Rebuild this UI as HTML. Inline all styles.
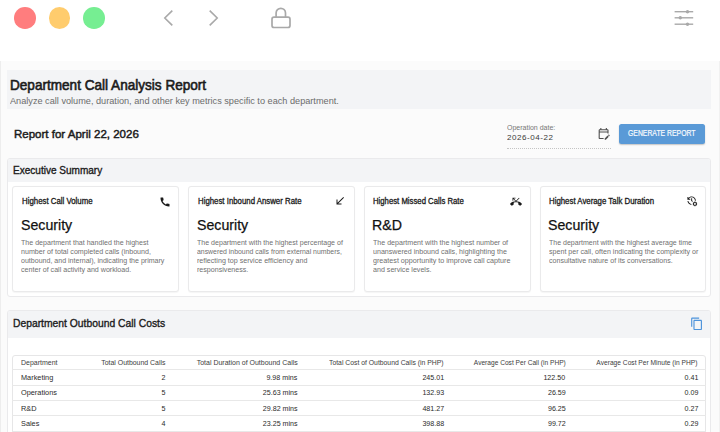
<!DOCTYPE html>
<html><head><meta charset="utf-8">
<style>
*{margin:0;padding:0;box-sizing:border-box}
html,body{width:720px;height:432px;overflow:hidden;background:#fff;font-family:"Liberation Sans",sans-serif;color:#1c1c1c;position:relative}
.t{position:absolute;white-space:nowrap;line-height:1}
.b{position:absolute}
.dot{position:absolute;width:21.6px;height:21.6px;border-radius:50%}
.card{position:absolute;top:186.4px;height:105.2px;background:#fff;border:1px solid #eaeaeb;border-radius:3px;box-shadow:0 0.5px 1px rgba(0,0,0,0.04)}
.hl{position:absolute;left:12.2px;width:694.2px;height:1px;background:#e8e8e8}
svg{position:absolute;overflow:visible}
</style></head><body>
<!-- top bar -->
<div class="dot" style="left:14.4px;top:7.1px;background:#ff7d7e"></div>
<div class="dot" style="left:48.9px;top:7.1px;background:#ffcc6d"></div>
<div class="dot" style="left:83.4px;top:7.1px;background:#76ee92"></div>
<svg style="left:160px;top:8px" width="20" height="20" viewBox="0 0 20 20"><path d="M12.3 2.6 L4.8 10 L12.3 17.4" fill="none" stroke="#a9a9a9" stroke-width="1.6"/></svg>
<svg style="left:202.7px;top:8px" width="20" height="20" viewBox="0 0 20 20"><path d="M6.7 2.6 L14.2 10 L6.7 17.4" fill="none" stroke="#a9a9a9" stroke-width="1.6"/></svg>
<svg style="left:270px;top:6px" width="22" height="24" viewBox="0 0 22 24"><path d="M6.1 11.5 V7 A4.7 4.7 0 0 1 15.5 7 V11.5" fill="none" stroke="#a9a9a9" stroke-width="1.7"/><rect x="2" y="11.2" width="18" height="10.3" rx="2" fill="none" stroke="#a9a9a9" stroke-width="1.7"/></svg>
<svg style="left:672px;top:8px" width="24" height="20" viewBox="0 0 24 20"><g stroke="#a9a9a9" stroke-width="1.4"><line x1="2.6" y1="3.7" x2="21.2" y2="3.7"/><line x1="2.6" y1="9.8" x2="21.2" y2="9.8"/><line x1="2.6" y1="16.2" x2="21.2" y2="16.2"/></g><g fill="#a9a9a9"><circle cx="15.5" cy="3.7" r="1.7"/><circle cx="8.3" cy="9.8" r="1.7"/><circle cx="15.5" cy="16.2" r="1.7"/></g></svg>

<!-- page container -->
<div class="b" style="left:0;top:61px;width:720px;height:371px;background:#fbfbfb"></div>
<div class="b" style="left:719px;top:61px;width:1px;height:371px;background:#f1f1f1"></div>
<div class="b" style="left:0;top:61px;width:1px;height:371px;background:#ededed"></div>

<!-- header band -->
<div class="b" style="left:7.4px;top:69.6px;width:703.6px;height:39.6px;background:#f3f4f6"></div>

<!-- report row -->
<div class="b" style="left:0;top:109.2px;width:720px;height:0px;background:#fff"></div>
<div class="b" style="left:507px;top:147.8px;width:104px;height:0;border-top:1px dotted #c4c4c4"></div>
<svg style="left:597.3px;top:126.7px" width="13.2" height="13.2" viewBox="0 0 24 24"><path d="M5 10h14v2h2V6c0-1.1-.9-2-2-2h-1V2h-2v2H8V2H6v2H5c-1.11 0-1.99.9-1.99 2L3 20c0 1.1.89 2 2 2h7v-2H5V10zm0-4h14v2H5V6zm17.84 10.28-.71.71-2.12-2.12.71-.71c.39-.39 1.02-.39 1.41 0l.71.71c.39.39.39 1.02 0 1.41zm-3.54-.7 2.12 2.12-5.3 5.3H14v-2.12l5.3-5.3z" fill="#4f4f4f"/></svg>
<div class="b" style="left:619.4px;top:123.9px;width:85.2px;height:20.1px;background:#5a9ad7;border-radius:2.5px;box-shadow:0 1px 1.5px rgba(0,0,0,0.22)"></div>

<!-- executive summary panel -->
<div class="b" style="left:7.4px;top:157.6px;width:703.6px;height:139.2px;background:#fff;border:1px solid #eaeaec;border-radius:3px;overflow:hidden">
  <div class="b" style="left:0;top:0;right:0;height:23.6px;background:#f3f4f6"></div>
</div>
<div class="card" style="left:12.4px;width:166.2px"></div>
<div class="card" style="left:188.3px;width:166.6px"></div>
<div class="card" style="left:364.1px;width:166.6px"></div>
<div class="card" style="left:539.7px;width:166.7px"></div>
<svg style="left:158.5px;top:195.8px" width="12" height="12" viewBox="0 0 24 24"><path d="M20.01 15.38c-1.23 0-2.42-.2-3.53-.56a.977.977 0 0 0-1.01.24l-1.57 1.97c-2.83-1.35-5.48-3.9-6.89-6.83l1.95-1.66c.27-.28.35-.67.24-1.02-.37-1.11-.56-2.3-.56-3.53 0-.54-.45-.99-.99-.99H4.19C3.65 3 3 3.24 3 3.99 3 13.28 10.73 21 20.01 21c.71 0 .99-.63.99-1.18v-3.45c0-.54-.45-.99-.99-.99z" fill="#1a1a1a"/></svg>
<svg style="left:334.2px;top:195.4px" width="12" height="12" viewBox="0 0 24 24"><path d="M20 5.41 18.59 4 7 15.59V9H5v10h10v-2H8.41z" fill="#1a1a1a"/></svg>
<svg style="left:510px;top:195.5px" width="12" height="12.6" viewBox="0 0 24 24"><path d="M6.5 5.5 12 11l7-7-1-1-6 6-4.5-4.5H11V3H5v6h1.5V5.5z" fill="#1a1a1a"/><path d="M23.71 14.67C20.66 11.78 16.54 10 12 10 7.46 10 3.34 11.78.29 14.67c-.18.18-.29.43-.29.71s.11.53.29.71l2.48 2.48c.18.18.43.29.71.29.27 0 .52-.11.7-.28.79-.74 1.69-1.36 2.66-1.85.33-.16.56-.5.56-.9v-3.1c1.45-.48 3-.73 4.6-.73 1.6 0 3.15.25 4.6.72v3.1c0 .39.23.74.56.9.98.49 1.87 1.12 2.67 1.85.18.18.43.28.7.28.28 0 .53-.11.71-.29l2.48-2.48c.18-.18.29-.43.29-.71s-.12-.52-.3-.7z" fill="#1a1a1a"/></svg>
<svg style="left:686.4px;top:195.4px" width="11.3" height="11.3" viewBox="0 0 24 24"><path d="M22.69 18.37l1.14-1-1-1.73-1.45.49c-.32-.27-.68-.48-1.080-.63L20 14h-2l-.3 1.49c-.4.15-.76.36-1.08.63l-1.45-.49-1 1.73 1.14 1c-.08.5-.08.76 0 1.26l-1.14 1 1 1.73 1.45-.49c.32.27.68.48 1.08.63L18 24h2l.3-1.49c.4-.15.76-.36 1.08-.63l1.45.49 1-1.73-1.14-1c.08-.51.08-.77 0-1.27zM19 21c-1.1 0-2-.9-2-2s.9-2 2-2 2 .9 2 2-.9 2-2 2zM11 7v5.41l2.36 2.36 1.04-1.79-1.4-1.4V7h-2zm10 5c0-4.970-4.03-9-9-9-2.83 0-5.35 1.32-7 3.36V4H3v6h6V8H6.26C7.53 6.19 9.63 5 12 5c3.86 0 7 3.14 7 7h2zm-10.14 6.91c-2.99-.49-5.350-2.9-5.78-5.91H3.06c.5 4.5 4.37 8 8.94 8h.07l-1.21-2.09z" fill="#1a1a1a"/></svg>

<!-- outbound call costs panel -->
<div class="b" style="left:7.4px;top:310px;width:703.6px;height:140px;background:#fff;border:1px solid #eaeaec;border-radius:3px;overflow:hidden">
  <div class="b" style="left:0;top:0;right:0;height:26.6px;background:#f3f4f6"></div>
</div>
<svg style="left:690px;top:316.9px" width="13.7" height="13.7" viewBox="0 0 24 24"><path d="M16 1H4c-1.1 0-2 .9-2 2v14h2V3h12V1zm3 4H8c-1.1 0-2 .9-2 2v14c0 1.1.9 2 2 2h11c1.1 0 2-.9 2-2V7c0-1.1-.9-2-2-2zm0 16H8V7h11v14z" fill="#4d93db"/></svg>
<div class="b" style="left:11.9px;top:354.8px;width:694.5px;height:90px;background:#fff;border:1px solid #e6e6e7;border-radius:3px"></div>
<div class="hl" style="top:369.3px"></div>
<div class="hl" style="top:384.6px"></div>
<div class="hl" style="top:399.9px"></div>
<div class="hl" style="top:415.3px"></div>
<div class="hl" style="top:430.6px"></div>
<div class="t" style="left:10.30px;top:77.76px;font-size:14.10px;font-weight:normal;color:#1b1b1b;transform:scaleX(0.963);transform-origin:left 50%;-webkit-text-stroke:0.6px #1b1b1b;">Department Call Analysis Report</div>
<div class="t" style="left:10.00px;top:96.82px;font-size:9.30px;font-weight:normal;color:#6c6c6c;transform:scaleX(0.985);transform-origin:left 50%;">Analyze call volume, duration, and other key metrics specific to each department.</div>
<div class="t" style="left:13.60px;top:128.82px;font-size:11.19px;font-weight:normal;color:#1b1b1b;transform:scaleX(1.029);transform-origin:left 50%;-webkit-text-stroke:0.45px #1b1b1b;">Report for April 22, 2026</div>
<div class="t" style="left:507.20px;top:124.35px;font-size:7.85px;font-weight:normal;color:#767676;transform:scaleX(0.893);transform-origin:left 50%;">Operation date:</div>
<div class="t" style="left:507.20px;top:134.14px;font-size:8.10px;font-weight:normal;color:#3a3a3a;transform:scaleX(0.992);transform-origin:left 50%;letter-spacing:0.55px;">2026-04-22</div>
<div class="t" style="left:628.20px;top:130.01px;font-size:8.14px;font-weight:normal;color:#f7fafd;transform:scaleX(0.843);transform-origin:left 50%;-webkit-text-stroke:0.2px #f7fafd;">GENERATE REPORT</div>
<div class="t" style="left:12.90px;top:164.55px;font-size:10.68px;font-weight:normal;color:#1b1b1b;transform:scaleX(0.940);transform-origin:left 50%;-webkit-text-stroke:0.35px #1b1b1b;">Executive Summary</div>
<div class="t" style="left:12.70px;top:318.07px;font-size:10.90px;font-weight:normal;color:#1b1b1b;transform:scaleX(0.948);transform-origin:left 50%;-webkit-text-stroke:0.35px #1b1b1b;">Department Outbound Call Costs</div>
<div class="t" style="left:21.60px;top:197.61px;font-size:8.14px;font-weight:normal;color:#1b1b1b;transform:scaleX(0.965);transform-origin:left 50%;-webkit-text-stroke:0.3px #1b1b1b;">Highest Call Volume</div>
<div class="t" style="left:20.60px;top:217.85px;font-size:14.70px;font-weight:normal;color:#111;transform:scaleX(0.965);transform-origin:left 50%;-webkit-text-stroke:0.25px #111;">Security</div>
<div class="t" style="left:21.30px;top:239.26px;font-size:7.25px;font-weight:normal;color:#707070;transform:scaleX(0.976);transform-origin:left 50%;">The department that handled the highest</div>
<div class="t" style="left:21.30px;top:248.01px;font-size:7.25px;font-weight:normal;color:#707070;transform:scaleX(0.980);transform-origin:left 50%;">number of total completed calls (inbound,</div>
<div class="t" style="left:21.30px;top:256.76px;font-size:7.25px;font-weight:normal;color:#707070;transform:scaleX(0.972);transform-origin:left 50%;">outbound, and internal), indicating the primary</div>
<div class="t" style="left:21.30px;top:265.51px;font-size:7.25px;font-weight:normal;color:#707070;transform:scaleX(0.980);transform-origin:left 50%;">center of call activity and workload.</div>
<div class="t" style="left:197.50px;top:197.61px;font-size:8.14px;font-weight:normal;color:#1b1b1b;transform:scaleX(0.963);transform-origin:left 50%;-webkit-text-stroke:0.3px #1b1b1b;">Highest Inbound Answer Rate</div>
<div class="t" style="left:196.50px;top:217.85px;font-size:14.70px;font-weight:normal;color:#111;transform:scaleX(0.965);transform-origin:left 50%;-webkit-text-stroke:0.25px #111;">Security</div>
<div class="t" style="left:197.20px;top:239.26px;font-size:7.25px;font-weight:normal;color:#707070;transform:scaleX(0.973);transform-origin:left 50%;">The department with the highest percentage of</div>
<div class="t" style="left:197.20px;top:248.01px;font-size:7.25px;font-weight:normal;color:#707070;transform:scaleX(0.951);transform-origin:left 50%;">answered inbound calls from external numbers,</div>
<div class="t" style="left:197.20px;top:256.76px;font-size:7.25px;font-weight:normal;color:#707070;transform:scaleX(0.980);transform-origin:left 50%;">reflecting top service efficiency and</div>
<div class="t" style="left:197.20px;top:265.51px;font-size:7.25px;font-weight:normal;color:#707070;transform:scaleX(0.980);transform-origin:left 50%;">responsiveness.</div>
<div class="t" style="left:373.30px;top:197.61px;font-size:8.14px;font-weight:normal;color:#1b1b1b;transform:scaleX(0.953);transform-origin:left 50%;-webkit-text-stroke:0.3px #1b1b1b;">Highest Missed Calls Rate</div>
<div class="t" style="left:372.30px;top:217.85px;font-size:14.70px;font-weight:normal;color:#111;transform:scaleX(0.965);transform-origin:left 50%;-webkit-text-stroke:0.25px #111;">R&amp;D</div>
<div class="t" style="left:373.00px;top:239.26px;font-size:7.25px;font-weight:normal;color:#707070;transform:scaleX(0.977);transform-origin:left 50%;">The department with the highest number of</div>
<div class="t" style="left:373.00px;top:248.01px;font-size:7.25px;font-weight:normal;color:#707070;transform:scaleX(0.980);transform-origin:left 50%;">unanswered inbound calls, highlighting the</div>
<div class="t" style="left:373.00px;top:256.76px;font-size:7.25px;font-weight:normal;color:#707070;transform:scaleX(0.988);transform-origin:left 50%;">greatest opportunity to improve call capture</div>
<div class="t" style="left:373.00px;top:265.51px;font-size:7.25px;font-weight:normal;color:#707070;transform:scaleX(0.980);transform-origin:left 50%;">and service levels.</div>
<div class="t" style="left:548.90px;top:197.61px;font-size:8.14px;font-weight:normal;color:#1b1b1b;transform:scaleX(0.964);transform-origin:left 50%;-webkit-text-stroke:0.3px #1b1b1b;">Highest Average Talk Duration</div>
<div class="t" style="left:547.90px;top:217.85px;font-size:14.70px;font-weight:normal;color:#111;transform:scaleX(0.965);transform-origin:left 50%;-webkit-text-stroke:0.25px #111;">Security</div>
<div class="t" style="left:548.60px;top:239.26px;font-size:7.25px;font-weight:normal;color:#707070;transform:scaleX(0.969);transform-origin:left 50%;">The department with the highest average time</div>
<div class="t" style="left:548.60px;top:248.01px;font-size:7.25px;font-weight:normal;color:#707070;transform:scaleX(0.978);transform-origin:left 50%;">spent per call, often indicating the complexity or</div>
<div class="t" style="left:548.60px;top:256.76px;font-size:7.25px;font-weight:normal;color:#707070;transform:scaleX(0.974);transform-origin:left 50%;">consultative nature of its conversations.</div>
<div class="t" style="left:20.90px;top:358.77px;font-size:7.60px;font-weight:normal;color:#3c3c3c;transform:scaleX(0.920);transform-origin:left 50%;">Department</div>
<div class="t" style="right:554.70px;top:358.77px;font-size:7.60px;font-weight:normal;color:#3c3c3c;transform:scaleX(0.912);transform-origin:right 50%;">Total Outbound Calls</div>
<div class="t" style="right:422.60px;top:358.77px;font-size:7.60px;font-weight:normal;color:#3c3c3c;transform:scaleX(0.921);transform-origin:right 50%;">Total Duration of Outbound Calls</div>
<div class="t" style="right:276.20px;top:358.77px;font-size:7.60px;font-weight:normal;color:#3c3c3c;transform:scaleX(0.898);transform-origin:right 50%;">Total Cost of Outbound Calls (in PHP)</div>
<div class="t" style="right:154.50px;top:358.77px;font-size:7.60px;font-weight:normal;color:#3c3c3c;transform:scaleX(0.869);transform-origin:right 50%;">Average Cost Per Call (in PHP)</div>
<div class="t" style="right:22.00px;top:358.77px;font-size:7.60px;font-weight:normal;color:#3c3c3c;transform:scaleX(0.876);transform-origin:right 50%;">Average Cost Per Minute (in PHP)</div>
<div class="t" style="left:20.90px;top:374.11px;font-size:7.90px;font-weight:normal;color:#2a2a2a;transform:scaleX(0.930);transform-origin:left 50%;">Marketing</div>
<div class="t" style="right:554.70px;top:374.11px;font-size:7.90px;font-weight:normal;color:#2a2a2a;transform:scaleX(0.900);transform-origin:right 50%;">2</div>
<div class="t" style="right:422.60px;top:374.11px;font-size:7.90px;font-weight:normal;color:#2a2a2a;transform:scaleX(0.900);transform-origin:right 50%;">9.98 mins</div>
<div class="t" style="right:276.20px;top:374.11px;font-size:7.90px;font-weight:normal;color:#2a2a2a;transform:scaleX(0.900);transform-origin:right 50%;">245.01</div>
<div class="t" style="right:154.50px;top:374.11px;font-size:7.90px;font-weight:normal;color:#2a2a2a;transform:scaleX(0.900);transform-origin:right 50%;">122.50</div>
<div class="t" style="right:22.00px;top:374.11px;font-size:7.90px;font-weight:normal;color:#2a2a2a;transform:scaleX(0.900);transform-origin:right 50%;">0.41</div>
<div class="t" style="left:20.90px;top:389.46px;font-size:7.90px;font-weight:normal;color:#2a2a2a;transform:scaleX(0.930);transform-origin:left 50%;">Operations</div>
<div class="t" style="right:554.70px;top:389.46px;font-size:7.90px;font-weight:normal;color:#2a2a2a;transform:scaleX(0.900);transform-origin:right 50%;">5</div>
<div class="t" style="right:422.60px;top:389.46px;font-size:7.90px;font-weight:normal;color:#2a2a2a;transform:scaleX(0.900);transform-origin:right 50%;">25.63 mins</div>
<div class="t" style="right:276.20px;top:389.46px;font-size:7.90px;font-weight:normal;color:#2a2a2a;transform:scaleX(0.900);transform-origin:right 50%;">132.93</div>
<div class="t" style="right:154.50px;top:389.46px;font-size:7.90px;font-weight:normal;color:#2a2a2a;transform:scaleX(0.900);transform-origin:right 50%;">26.59</div>
<div class="t" style="right:22.00px;top:389.46px;font-size:7.90px;font-weight:normal;color:#2a2a2a;transform:scaleX(0.900);transform-origin:right 50%;">0.09</div>
<div class="t" style="left:20.90px;top:404.81px;font-size:7.90px;font-weight:normal;color:#2a2a2a;transform:scaleX(0.930);transform-origin:left 50%;">R&amp;D</div>
<div class="t" style="right:554.70px;top:404.81px;font-size:7.90px;font-weight:normal;color:#2a2a2a;transform:scaleX(0.900);transform-origin:right 50%;">5</div>
<div class="t" style="right:422.60px;top:404.81px;font-size:7.90px;font-weight:normal;color:#2a2a2a;transform:scaleX(0.900);transform-origin:right 50%;">29.82 mins</div>
<div class="t" style="right:276.20px;top:404.81px;font-size:7.90px;font-weight:normal;color:#2a2a2a;transform:scaleX(0.900);transform-origin:right 50%;">481.27</div>
<div class="t" style="right:154.50px;top:404.81px;font-size:7.90px;font-weight:normal;color:#2a2a2a;transform:scaleX(0.900);transform-origin:right 50%;">96.25</div>
<div class="t" style="right:22.00px;top:404.81px;font-size:7.90px;font-weight:normal;color:#2a2a2a;transform:scaleX(0.900);transform-origin:right 50%;">0.27</div>
<div class="t" style="left:20.90px;top:420.16px;font-size:7.90px;font-weight:normal;color:#2a2a2a;transform:scaleX(0.930);transform-origin:left 50%;">Sales</div>
<div class="t" style="right:554.70px;top:420.16px;font-size:7.90px;font-weight:normal;color:#2a2a2a;transform:scaleX(0.900);transform-origin:right 50%;">4</div>
<div class="t" style="right:422.60px;top:420.16px;font-size:7.90px;font-weight:normal;color:#2a2a2a;transform:scaleX(0.900);transform-origin:right 50%;">23.25 mins</div>
<div class="t" style="right:276.20px;top:420.16px;font-size:7.90px;font-weight:normal;color:#2a2a2a;transform:scaleX(0.900);transform-origin:right 50%;">398.88</div>
<div class="t" style="right:154.50px;top:420.16px;font-size:7.90px;font-weight:normal;color:#2a2a2a;transform:scaleX(0.900);transform-origin:right 50%;">99.72</div>
<div class="t" style="right:22.00px;top:420.16px;font-size:7.90px;font-weight:normal;color:#2a2a2a;transform:scaleX(0.900);transform-origin:right 50%;">0.29</div>
</body></html>
